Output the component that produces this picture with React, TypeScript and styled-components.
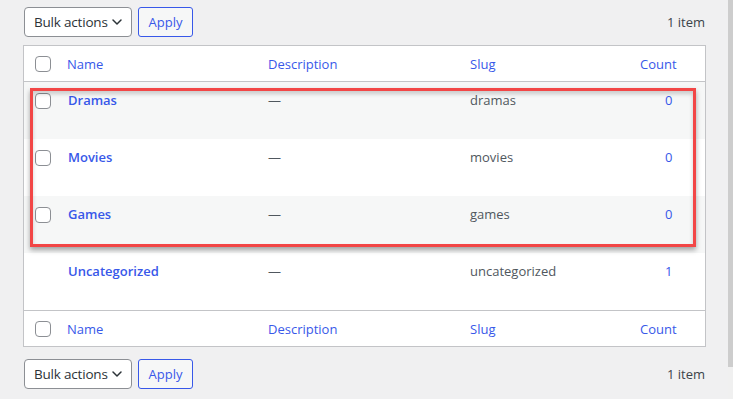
import React from "react";
import styled, { createGlobalStyle } from "styled-components";

const GlobalStyle = createGlobalStyle`
  html, body {
    margin: 0;
    padding: 0;
    background: #f0f0f1;
  }
  body {
    font-family: "Open Sans", "Noto Sans", sans-serif;
    color: #3c434a;
    overflow: hidden;
  }
`;

const Page = styled.div`
  display: flex;
  width: 733px;
  height: 399px;
`;

const Content = styled.div`
  flex: 1;
  padding: 7px 22px 0 23px;
  display: flex;
  flex-direction: column;
`;

const Scrollbar = styled.div`
  width: 5px;
  background: #f0f0f0;
`;

const Thumb = styled.div`
  height: 367px;
  background: #cdcdcd;
`;

const Toolbar = styled.div<{ bottom?: boolean }>`
  display: flex;
  align-items: center;
  height: 30px;
  margin-bottom: ${(p) => (p.bottom ? "0" : "8px")};
  margin-top: ${(p) => (p.bottom ? "12px" : "0")};
  padding-left: 1px;
`;

const Select = styled.div`
  box-sizing: border-box;
  width: 108px;
  height: 30px;
  border: 1px solid #8c8f94;
  border-radius: 4px;
  background: #fff;
  display: flex;
  align-items: center;
  justify-content: space-between;
  padding: 0 8px 0 9px;
  font-size: 13.5px;
  letter-spacing: -0.2px;
  white-space: nowrap;
  color: #2c3338;
`;

const ApplyButton = styled.button`
  box-sizing: border-box;
  margin-left: 6px;
  width: 55px;
  height: 30px;
  border: 1px solid #3858e9;
  border-radius: 3px;
  background: #f6f7f7;
  color: #3858e9;
  font-family: inherit;
  font-size: 13px;
  padding: 0;
`;

const Count = styled.div`
  margin-left: auto;
  font-size: 13px;
  color: #3c434a;
  padding-right: 1px;
`;

const Table = styled.div`
  position: relative;
  background: #fff;
  border: 1px solid #c3c4c7;
`;

const Row = styled.div<{ head?: boolean; foot?: boolean; striped?: boolean }>`
  display: grid;
  grid-template-columns: 43px 201px 202px 170px 1fr;
  height: ${(p) => (p.head || p.foot ? "35px" : "57px")};
  align-items: ${(p) => (p.head || p.foot ? "center" : "start")};
  background: ${(p) => (p.striped ? "#f6f7f7" : "#fff")};
  border-bottom: ${(p) => (p.head ? "1px solid #c3c4c7" : "none")};
  border-top: ${(p) => (p.foot ? "1px solid #c3c4c7" : "none")};
  font-size: 13px;
  line-height: 20px;
`;

const Cell = styled.div<{ num?: boolean; head?: boolean }>`
  padding-top: ${(p) => (p.head ? "0" : "8px")};
  padding-left: ${(p) => (p.num ? (p.head ? "0" : "25px") : "0")};
  color: ${(p) => (p.head ? "#3858e9" : "#50575e")};
`;

const CheckCell = styled.div<{ head?: boolean }>`
  padding-left: 11px;
  padding-top: ${(p) => (p.head ? "0" : "11px")};
  height: ${(p) => (p.head ? "16px" : "auto")};
`;

const Checkbox = styled.span`
  display: block;
  box-sizing: border-box;
  width: 16px;
  height: 16px;
  border: 1px solid #8c8f94;
  border-radius: 4px;
  background: #fff;
`;

const NameLink = styled.a`
  color: #3858e9;
  font-weight: 600;
  text-decoration: none;
  padding-left: 1px;
`;

const CountLink = styled.a`
  color: #3858e9;
  text-decoration: none;
`;

const Highlight = styled.div`
  position: absolute;
  left: 6px;
  top: 42px;
  width: 666px;
  height: 159px;
  box-sizing: border-box;
  border: 3px solid #f24646;
  box-shadow: 0 3px 5px rgba(0, 0, 0, 0.35), inset 0 3px 4px rgba(0, 0, 0, 0.18);
  pointer-events: none;
`;

const Chevron = () => (
  <svg width="12" height="12" viewBox="0 0 12 12" fill="none">
    <path d="M2 4l4 4 4-4" stroke="#2c3338" strokeWidth="1.5" strokeLinecap="round" strokeLinejoin="round" />
  </svg>
);

const terms = [
  { name: "Dramas", slug: "dramas", count: 0, check: true },
  { name: "Movies", slug: "movies", count: 0, check: true },
  { name: "Games", slug: "games", count: 0, check: true },
  { name: "Uncategorized", slug: "uncategorized", count: 1, check: false },
];

const HeaderRow = ({ foot }: { foot?: boolean }) => (
  <Row head={!foot} foot={foot}>
    <CheckCell head>
      <Checkbox />
    </CheckCell>
    <Cell head>Name</Cell>
    <Cell head>Description</Cell>
    <Cell head>Slug</Cell>
    <Cell head num>Count</Cell>
  </Row>
);

const Actions = ({ bottom }: { bottom?: boolean }) => (
  <Toolbar bottom={bottom}>
    <Select>
      Bulk actions <Chevron />
    </Select>
    <ApplyButton>Apply</ApplyButton>
    <Count>1 item</Count>
  </Toolbar>
);

export default function App() {
  return (
    <Page>
      <GlobalStyle />
      <Content>
        <Actions />
        <Table>
          <HeaderRow />
          {terms.map((t, i) => (
            <Row key={t.slug} striped={i % 2 === 0}>
              <CheckCell>{t.check && <Checkbox />}</CheckCell>
              <Cell>
                <NameLink href="#">{t.name}</NameLink>
              </Cell>
              <Cell>—</Cell>
              <Cell>{t.slug}</Cell>
              <Cell num>
                <CountLink href="#">{t.count}</CountLink>
              </Cell>
            </Row>
          ))}
          <HeaderRow foot />
          <Highlight />
        </Table>
        <Actions bottom />
      </Content>
      <Scrollbar>
        <Thumb />
      </Scrollbar>
    </Page>
  );
}
